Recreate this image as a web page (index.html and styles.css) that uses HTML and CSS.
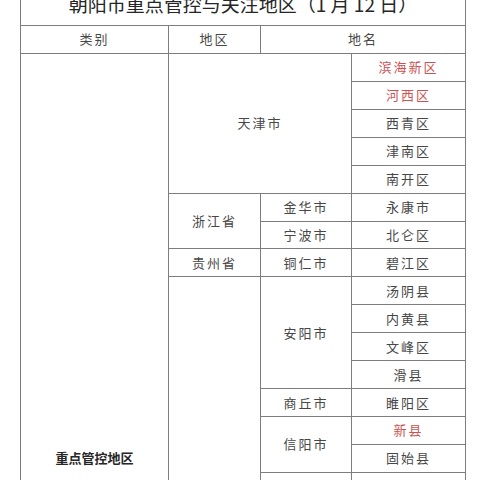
FILE: index.html
```html
<!DOCTYPE html>
<html lang="zh-CN">
<head>
<meta charset="utf-8">
<title>朝阳市重点管控与关注地区</title>
<link rel="stylesheet" href="styles.css">
</head>
<body>
<table class="sheet">
  <colgroup>
    <col class="c1"><col class="c2"><col class="c3"><col class="c4">
  </colgroup>
  <tr class="title-row"><td colspan="4" class="title">朝阳市重点管控与关注地区（1 月 12 日）</td></tr>
  <tr class="head-row"><td>类别</td><td>地区</td><td colspan="2">地名</td></tr>
  <tr><td rowspan="29" class="cat">重点管控地区</td><td colspan="2" rowspan="5">天津市</td><td class="red">滨海新区</td></tr>
  <tr><td class="red">河西区</td></tr>
  <tr><td>西青区</td></tr>
  <tr><td>津南区</td></tr>
  <tr><td>南开区</td></tr>
  <tr><td rowspan="2">浙江省</td><td>金华市</td><td>永康市</td></tr>
  <tr><td>宁波市</td><td>北仑区</td></tr>
  <tr><td>贵州省</td><td>铜仁市</td><td>碧江区</td></tr>
  <tr><td rowspan="20">河南省</td><td rowspan="4">安阳市</td><td>汤阴县</td></tr>
  <tr><td>内黄县</td></tr>
  <tr><td>文峰区</td></tr>
  <tr><td>滑县</td></tr>
  <tr><td>商丘市</td><td>睢阳区</td></tr>
  <tr><td rowspan="2">信阳市</td><td class="red">新县</td></tr>
  <tr><td>固始县</td></tr>
  <tr><td>许昌市</td><td class="red">禹州市</td></tr>
  <tr><td rowspan="2">郑州市</td><td>金水区</td></tr>
  <tr><td>中原区</td></tr>
  <tr><td>洛阳市</td><td>涧西区</td></tr>
  <tr><td>周口市</td><td>川汇区</td></tr>
  <tr><td>南阳市</td><td>宛城区</td></tr>
  <tr><td>开封市</td><td>鼓楼区</td></tr>
  <tr><td>新乡市</td><td>红旗区</td></tr>
  <tr><td>焦作市</td><td>解放区</td></tr>
  <tr><td>鹤壁市</td><td>淇滨区</td></tr>
  <tr><td>濮阳市</td><td>华龙区</td></tr>
  <tr><td>漯河市</td><td>源汇区</td></tr>
  <tr><td>驻马店市</td><td>驿城区</td></tr>
  <tr><td>河北省</td><td>石家庄市</td><td>藁城区</td></tr>
</table>
</body>
</html>
```
FILE: styles.css
```css
html {
  overflow: hidden;
  background: #ffffff;
}
body {
  margin: 0;
  background: #ffffff;
  font-family: "Noto Sans CJK SC", "Noto Sans", sans-serif;
}
.sheet {
  margin: -21px 0 0 20px;
  width: 445px;
  table-layout: fixed;
  border-collapse: collapse;
}
.c1 { width: 148px; }
.c2 { width: 92px; }
.c3 { width: 91px; }
.c4 { width: 114px; }
.sheet td {
  border: 1px solid #7d7d7d;
  height: 26.93px;
  padding: 0;
  text-align: center;
  vertical-align: middle;
  font-size: 13px;
  letter-spacing: 2px;
  color: #474747;
  line-height: 16px;
}
.sheet td.title {
  height: 41.5px;
  padding-top: 3px;
  font-size: 19px;
  letter-spacing: 0;
  color: #262626;
  line-height: 22px;
}
.head-row td {
  height: 27.5px;
}
.sheet td.cat {
  font-weight: 700;
  letter-spacing: 0;
  color: #262626;
}
.sheet td.red {
  color: #cc5252;
}
```
